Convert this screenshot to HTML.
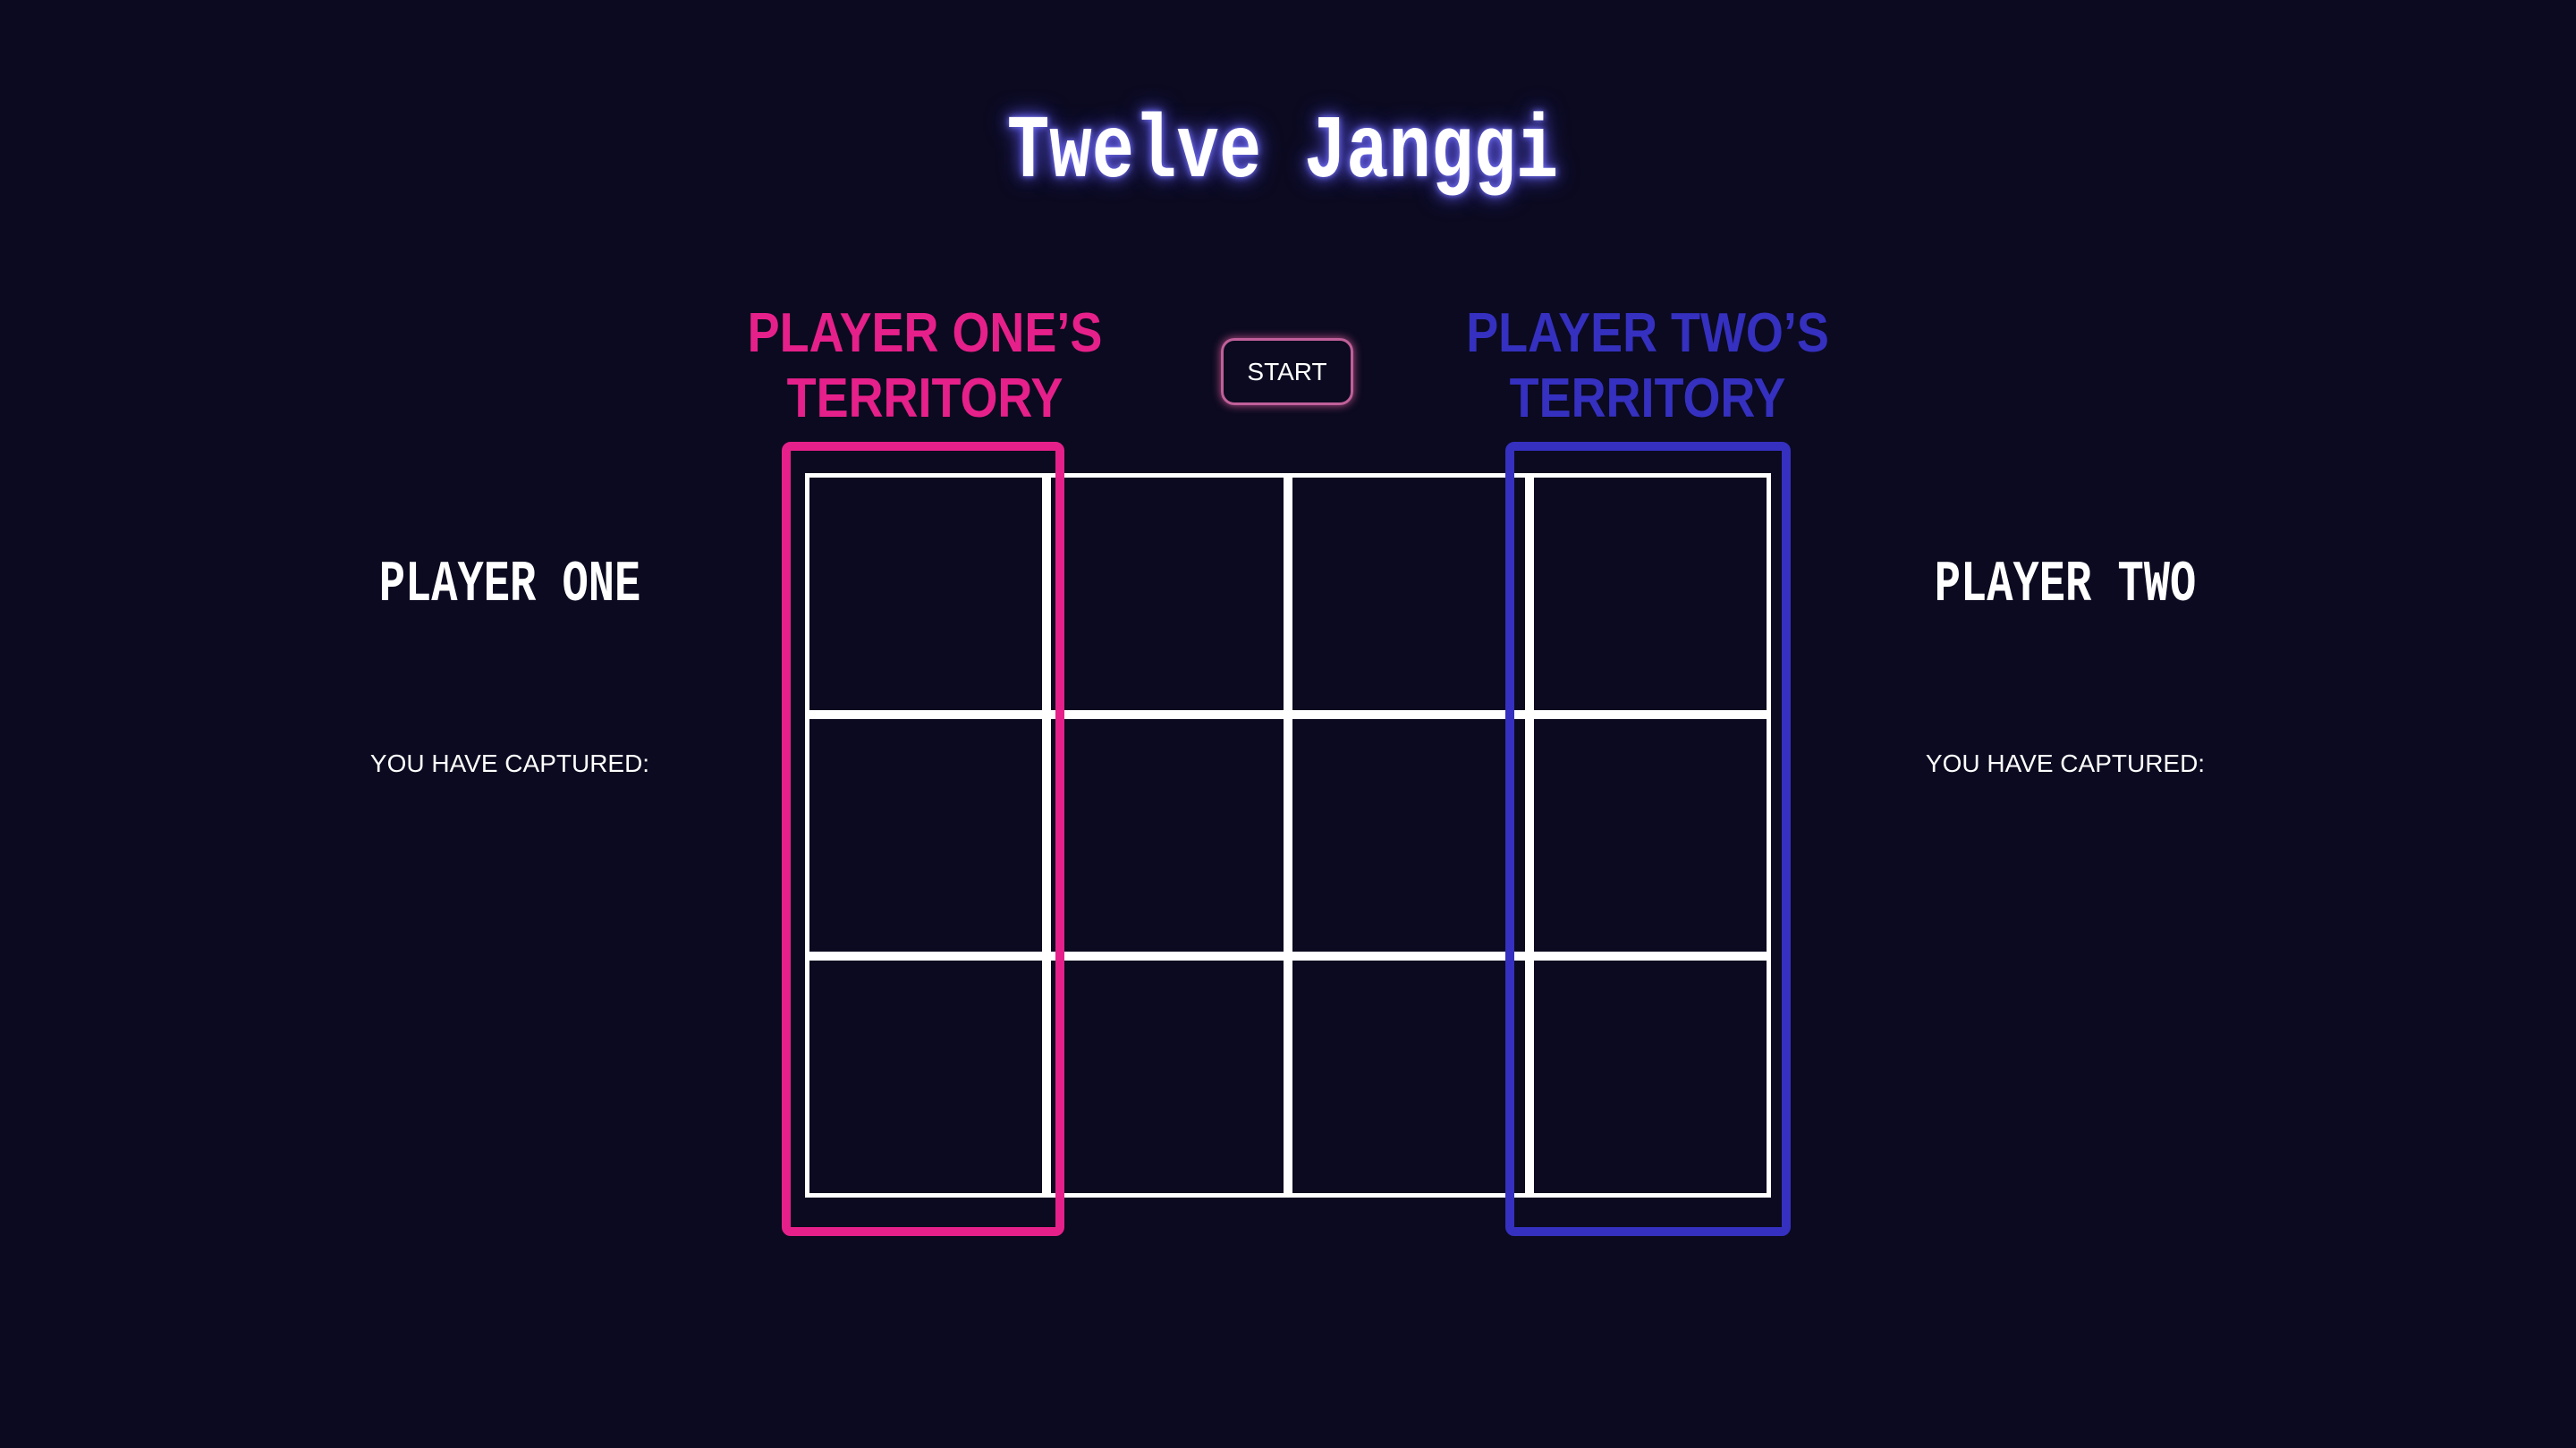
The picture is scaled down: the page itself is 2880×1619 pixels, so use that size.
<!DOCTYPE html>
<html><head><meta charset="utf-8"><style>
html,body{margin:0;padding:0}
body{width:2880px;height:1619px;background:#0b0a20;position:relative;overflow:hidden;font-family:"Liberation Sans",sans-serif}
.a{position:absolute;text-align:center;white-space:nowrap}
.title{left:934px;width:1000px;top:122px;font-family:"Liberation Mono",monospace;font-weight:bold;font-size:100px;line-height:100px;color:#fff;transform:scaleX(0.79);text-shadow:0 0 8px #7a78ff,0 0 18px #5550d0,0 0 30px #4a44c0}
.terr{font-weight:bold;font-size:62px;line-height:73px;width:600px;transform:scaleX(0.87)}
.pix{font-family:"Liberation Mono",monospace;font-weight:bold;font-size:65px;line-height:65px;color:#fff;width:600px;transform:scaleX(0.75)}
.cap{font-size:28px;line-height:28px;color:#fff;width:600px}
.box{position:absolute;box-sizing:border-box;border:10px solid;border-radius:10px}
.grid{position:absolute;left:900px;top:529px;width:1080px;height:810px;display:grid;grid-template-columns:repeat(4,270px);grid-template-rows:repeat(3,270px)}
.grid div{box-sizing:border-box;border:5px solid #fff}
.start{position:absolute;left:1365px;top:378px;width:148px;height:75px;box-sizing:border-box;border:3px solid #c0609a;border-radius:15px;box-shadow:0 0 10px #c0508a;color:#fff;font-size:28px;line-height:69px;text-align:center}
</style></head><body>
<div class="a title">Twelve Janggi</div>
<div class="a terr" style="left:734px;top:336px;color:#e6208a">PLAYER ONE’S<br>TERRITORY</div>
<div class="a terr" style="left:1542px;top:336px;color:#3530bf">PLAYER TWO’S<br>TERRITORY</div>
<div class="start">START</div>
<div class="grid"><div></div><div></div><div></div><div></div><div></div><div></div><div></div><div></div><div></div><div></div><div></div><div></div></div>
<div class="box" style="left:874px;top:494px;width:316px;height:888px;border-color:#e6208a"></div>
<div class="box" style="left:1683px;top:494px;width:319px;height:888px;border-color:#3530bf"></div>
<div class="a pix" style="left:270px;top:622px">PLAYER ONE</div>
<div class="a pix" style="left:2009px;top:622px">PLAYER TWO</div>
<div class="a cap" style="left:270px;top:840px">YOU HAVE CAPTURED:</div>
<div class="a cap" style="left:2009px;top:840px">YOU HAVE CAPTURED:</div>
</body></html>
